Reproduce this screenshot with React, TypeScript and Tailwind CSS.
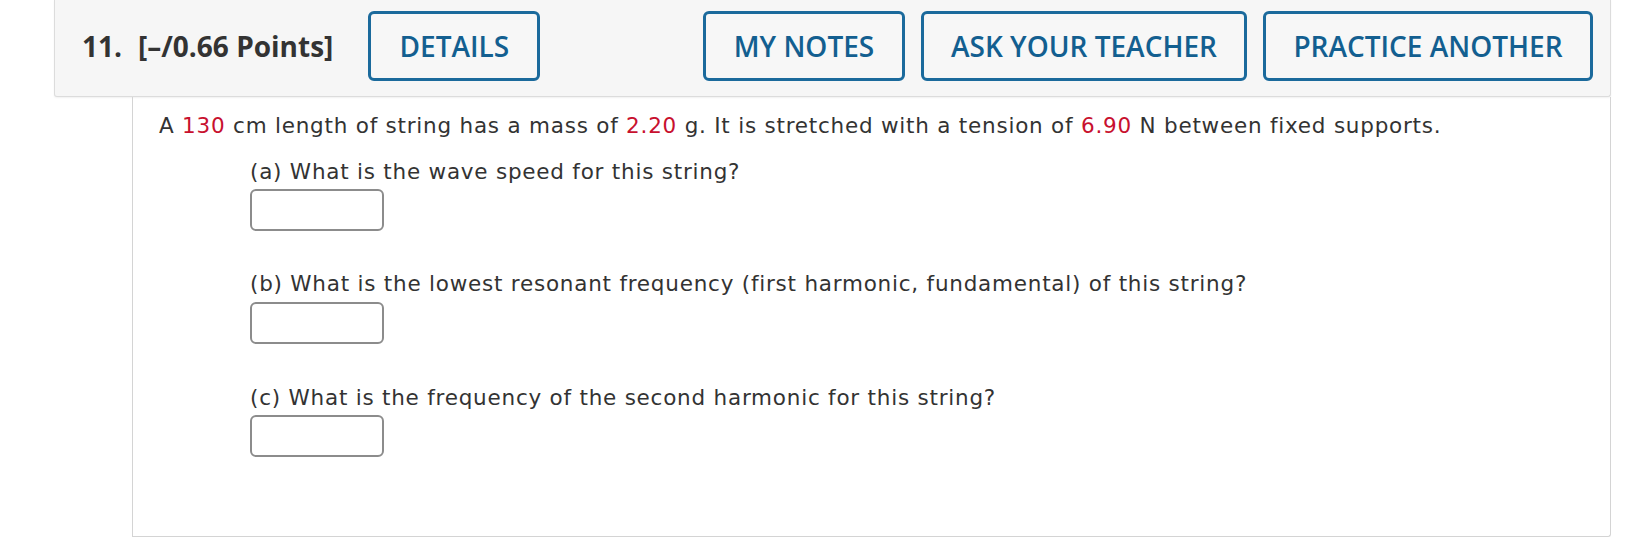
import React from "react";

const Red = ({ children }: { children: React.ReactNode }) => (
  <span className="text-[#c8102e]">{children}</span>
);

const HeaderButton = ({ label, w }: { label: string; w: string }) => (
  <button
    className={`${w} h-[70px] shrink-0 rounded-[6px] border-[3px] border-[#1b6a9c] bg-[#f7f7f7] text-[28px] font-semibold leading-none text-[#135f90]`}
    style={{ fontFamily: '"Open Sans", sans-serif' }}
  >
    {label}
  </button>
);

const AnswerBox = () => (
  <div className="h-[42px] w-[134px] rounded-[6px] border-2 border-[#8c8c8c] bg-white" />
);

export default function App() {
  return (
    <div className="h-[539px] w-[1640px] overflow-hidden bg-white">
      <div className="ml-[54px] w-[1557px]">
        <div
          className="flex items-center rounded-b-[3px] border-x border-b border-[#dcdcdc] bg-[#f6f6f6] pb-[15px] pl-[27px] pr-[17px] pt-[11px] text-[#333333] shadow-[0_1px_2px_rgba(0,0,0,0.06)]"
          style={{ fontFamily: '"Open Sans", sans-serif' }}
        >
          <span className="text-[28px] font-bold leading-none">11.</span>
          <span className="ml-[16px] text-[28px] font-bold leading-none">[–/0.66 Points]</span>
          <div className="ml-[35px]">
            <HeaderButton label="DETAILS" w="w-[172px]" />
          </div>
          <div className="flex-1" />
          <div className="flex gap-[16px]">
            <HeaderButton label="MY NOTES" w="w-[202px]" />
            <HeaderButton label="ASK YOUR TEACHER" w="w-[326px]" />
            <HeaderButton label="PRACTICE ANOTHER" w="w-[330px]" />
          </div>
        </div>
        <div
          className="ml-[78px] h-[440px] rounded-br-[3px] border-x border-b border-[#d4d4d4] pl-[26px] pt-[17px] text-[21.5px] leading-[24px] tracking-[0.77px] text-[#333333]"
          style={{ fontFamily: '"DejaVu Sans", Verdana, sans-serif' }}
        >
          <p>
            A <Red>130</Red> cm length of string has a mass of <Red>2.20</Red> g. It is stretched
            with a tension of <Red>6.90</Red> N between fixed supports.
          </p>
          <div className="ml-[91px] flex flex-col">
            <p className="mt-[22px]">(a) What is the wave speed for this string?</p>
            <div className="mt-[5px]">
              <AnswerBox />
            </div>
            <p className="mt-[41px]">
              (b) What is the lowest resonant frequency (first harmonic, fundamental) of this string?
            </p>
            <div className="mt-[6px]">
              <AnswerBox />
            </div>
            <p className="mt-[42px]">(c) What is the frequency of the second harmonic for this string?</p>
            <div className="mt-[5px]">
              <AnswerBox />
            </div>
          </div>
        </div>
      </div>
    </div>
  );
}
